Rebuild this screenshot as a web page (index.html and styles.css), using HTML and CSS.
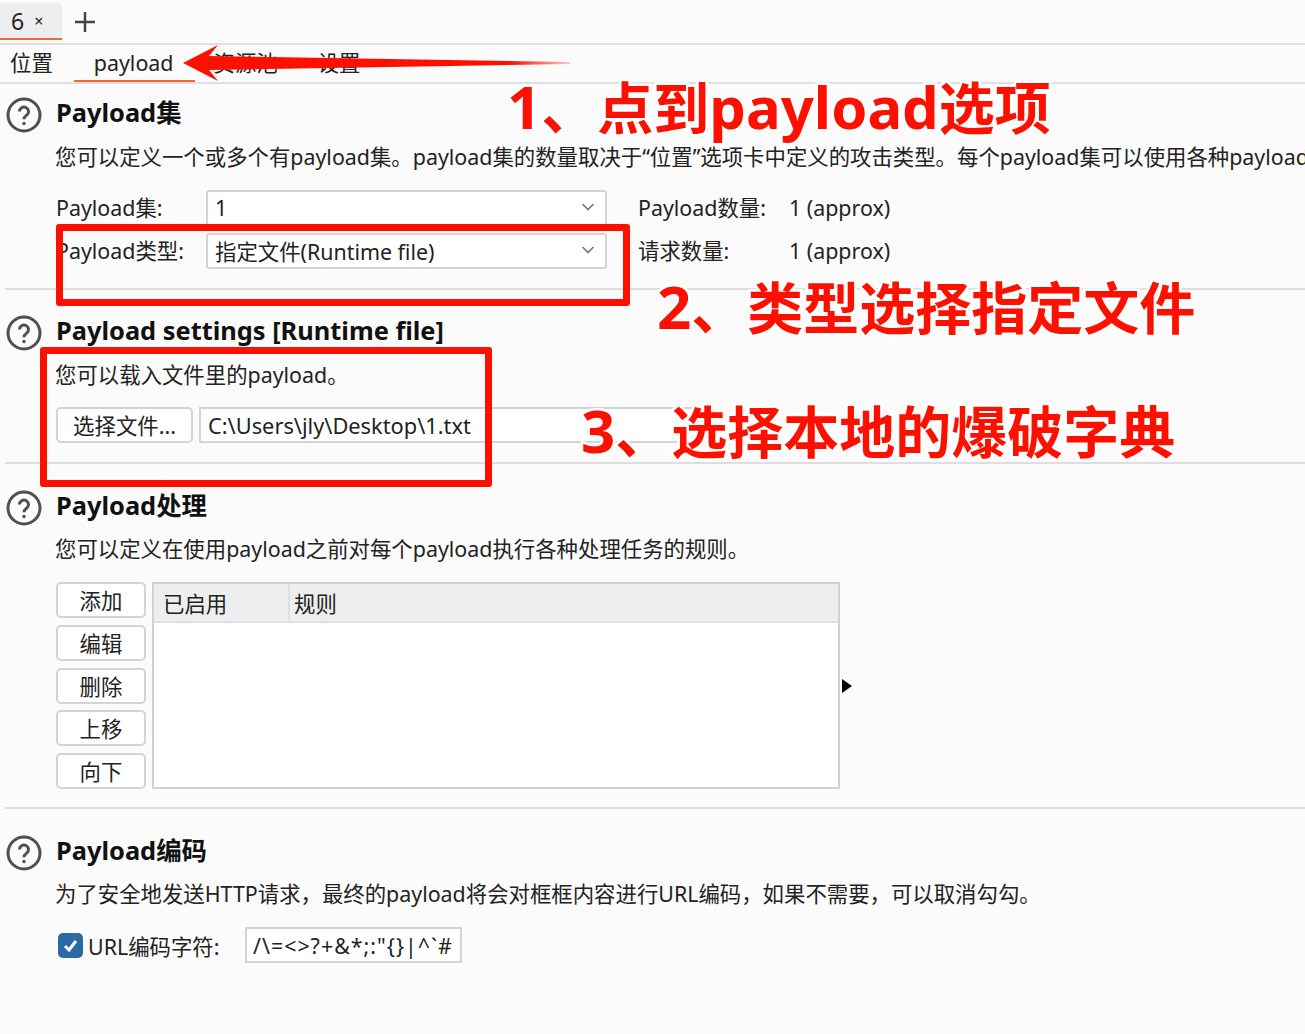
FILE: index.html
```html
<!DOCTYPE html>
<html lang="zh-CN">
<head>
<meta charset="utf-8">
<title>Intruder payload</title>
<link rel="stylesheet" href="styles.css">
</head>
<body>
<div class="page">
  <header class="tabbar">
    <div class="tab"><span class="tab-num">6</span><span class="tab-close">×</span></div>
    <svg class="tab-add" width="22" height="22" viewBox="0 0 22 22"><path d="M11 1v20M1 11h20"/></svg>
  </header>
  <nav class="subnav">
    <span class="subtab first">位置</span>
    <span class="subtab active">payload</span>
    <span class="subtab">资源池</span>
    <span class="subtab">设置</span>
  </nav>

  <section class="section">
    <div class="head">
      <svg class="help" width="36" height="36" viewBox="0 0 36 36"><circle cx="18" cy="18" r="16"/><path d="M13.500 14.500a4.500 4.500 0 1 1 7.200 3.600c-1.800 1.300-2.700 2.300-2.700 4.100"/><circle class="dot" cx="18" cy="26.500" r="1.700"/></svg>
      <h2 class="title">Payload集</h2>
    </div>
    <p class="desc">您可以定义一个或多个有payload集。payload集的数量取决于“位置”选项卡中定义的攻击类型。每个payload集可以使用各种payload</p>
    <div class="form-grid">
      <span class="label">Payload集:</span>
      <div class="combo"><span>1</span><svg class="chev" width="14" height="8" viewBox="0 0 14 8"><path d="M1.500 1l5.500 5.500L12.500 1"/></svg></div>
      <span class="label stat">Payload数量:</span>
      <span class="label">1 (approx)</span>
      <span class="label">Payload类型:</span>
      <div class="combo"><span>指定文件(Runtime file)</span><svg class="chev" width="14" height="8" viewBox="0 0 14 8"><path d="M1.500 1l5.500 5.500L12.500 1"/></svg></div>
      <span class="label stat">请求数量:</span>
      <span class="label">1 (approx)</span>
    </div>
  </section>
  <hr class="rule">

  <section class="section">
    <div class="head">
      <svg class="help" width="36" height="36" viewBox="0 0 36 36"><circle cx="18" cy="18" r="16"/><path d="M13.500 14.500a4.500 4.500 0 1 1 7.200 3.600c-1.800 1.300-2.700 2.300-2.700 4.100"/><circle class="dot" cx="18" cy="26.500" r="1.700"/></svg>
      <h2 class="title">Payload settings [Runtime file]</h2>
    </div>
    <p class="desc">您可以载入文件里的payload。</p>
    <div class="file-row">
      <button class="btn file-btn">选择文件...</button>
      <div class="field path">C:\Users\jly\Desktop\1.txt</div>
    </div>
  </section>
  <hr class="rule">

  <section class="section low">
    <div class="head">
      <svg class="help" width="36" height="36" viewBox="0 0 36 36"><circle cx="18" cy="18" r="16"/><path d="M13.500 14.500a4.500 4.500 0 1 1 7.200 3.600c-1.800 1.300-2.700 2.300-2.700 4.100"/><circle class="dot" cx="18" cy="26.500" r="1.700"/></svg>
      <h2 class="title">Payload处理</h2>
    </div>
    <p class="desc">您可以定义在使用payload之前对每个payload执行各种处理任务的规则。</p>
    <div class="rules">
      <div class="btn-col">
        <button class="btn">添加</button>
        <button class="btn">编辑</button>
        <button class="btn">删除</button>
        <button class="btn">上移</button>
        <button class="btn">向下</button>
      </div>
      <div class="table">
        <div class="thead">
          <span class="th th-first">已启用</span>
          <span class="th">规则</span>
        </div>
      </div>
      <svg class="splitter" width="10" height="14" viewBox="0 0 10 14"><path d="M0 0l10 7-10 7z"/></svg>
    </div>
  </section>
  <hr class="rule">

  <section class="section low">
    <div class="head">
      <svg class="help" width="36" height="36" viewBox="0 0 36 36"><circle cx="18" cy="18" r="16"/><path d="M13.500 14.500a4.500 4.500 0 1 1 7.200 3.600c-1.800 1.300-2.700 2.300-2.700 4.100"/><circle class="dot" cx="18" cy="26.500" r="1.700"/></svg>
      <h2 class="title">Payload编码</h2>
    </div>
    <p class="desc">为了安全地发送HTTP请求，最终的payload将会对框框内容进行URL编码，如果不需要，可以取消勾勾。</p>
    <div class="encode-row">
      <svg class="check" width="25" height="25" viewBox="0 0 25 25"><rect width="25" height="25" rx="5"/><path d="M7 13l4 4 7-9"/></svg>
      <span class="encode-label">URL编码字符:</span>
      <div class="field chars">/\=&lt;&gt;?+&amp;*;:"{}|^`#</div>
    </div>
  </section>

  <div class="mark mark-type"></div>
  <div class="mark mark-file"></div>
  <svg class="arrow" width="400" height="40" viewBox="0 0 400 40">
    <defs><linearGradient id="fade" x1="0" x2="1" y1="0" y2="0"><stop offset="0.85" stop-color="#fe1000"/><stop offset="1" stop-color="#fe1000" stop-opacity="0.2"/></linearGradient></defs>
    <path d="M3 18L38 0l-9 11 361 6v2L29 25l9 11z" fill="url(#fade)"/>
  </svg>
  <div class="note note-1"><span class="digit">1</span>、点到<span class="latin">payload</span>选项</div>
  <div class="note note-2"><span class="digit">2</span>、类型选择指定文件</div>
  <div class="note note-3"><span class="digit">3</span>、选择本地的爆破字典</div>
</div>
</body>
</html>
```
FILE: styles.css
```css
* { box-sizing: border-box; }
html, body { margin: 0; padding: 0; }
body {
  background: #fbfbfb;
  color: #222;
  font-family: "Noto Sans", "Noto Sans CJK SC", sans-serif;
  font-size: 21.4px;
}
.page {
  position: relative;
  width: 1305px;
  height: 1034px;
  overflow: hidden;
}

.tabbar {
  display: flex;
  align-items: flex-start;
  height: 45px;
  padding-top: 3px;
  border-bottom: 2px solid #e0e0e0;
}
.tab {
  display: flex;
  align-items: center;
  width: 62px;
  height: 37px;
  padding-left: 11px;
  gap: 10px;
  background: #eeeeee;
  border-bottom: 2px solid #f0693a;
  border-top-right-radius: 5px;
}
.tab-num { font-size: 23px; }
.tab-close { font-size: 16px; }
.tab-add { margin: 8px 0 0 12px; }
.tab-add path { fill: none; stroke: #444; stroke-width: 2.5; }

.subnav {
  display: flex;
  height: 39px;
  border-bottom: 2px solid #e0e0e0;
}
.subtab {
  padding: 0 20px;
  line-height: 36px;
}
.subtab.first { padding-left: 10px; padding-right: 21px; }
.subtab.active {
  height: 37px;
  padding-right: 22px;
  margin-right: -2px;
  border-bottom: 2px solid #f0693a;
}

.section { padding-top: 14px; }
.rule + .section { padding-top: 26px; }
.rule {
  height: 2px;
  margin: 19px 0 0 5px;
  border: 0;
  background: #dedede;
}
.head {
  display: flex;
  align-items: center;
  gap: 14px;
  height: 34px;
  padding-left: 6px;
}
.section.low .head { margin-top: 1px; }
.section.low .desc { margin-top: 9px; }
.help { flex: none; }
.help circle, .help path { fill: none; stroke: #505050; stroke-width: 3; }
.help .dot { fill: #505050; stroke: none; }
.title {
  margin: 0 0 6px;
  font-size: 25.400px;
  font-weight: 700;
  line-height: 30px;
  color: #111;
}
.desc {
  margin: 10px 0 0 55px;
  line-height: 30px;
  white-space: nowrap;
}

.form-grid {
  display: grid;
  grid-template-columns: 150px 401px 182px 1fr;
  row-gap: 7px;
  margin: 18px 0 0 56px;
}
.label { line-height: 36px; white-space: nowrap; }
.stat { padding-left: 31px; }
.combo {
  display: flex;
  align-items: center;
  justify-content: space-between;
  height: 36px;
  padding: 0 10px 2px 7px;
  background: #fff;
  border: 2px solid #d4d4d4;
  border-radius: 3px;
}
.chev path { fill: none; stroke: #777; stroke-width: 1.600; }

.btn {
  display: block;
  height: 36px;
  padding: 0 0 2px;
  background: #fff;
  border: 2px solid #d4d4d4;
  border-radius: 5px;
  color: inherit;
  font: inherit;
}
.field {
  height: 36px;
  line-height: 33px;
  background: #fff;
  border: 2px solid #d4d4d4;
  white-space: nowrap;
}

.file-row {
  display: flex;
  gap: 6px;
  margin: 17px 0 0 56px;
}
.file-btn { width: 137px; }
.path { width: 500px; padding-left: 7px; font-size: 21.800px; }

.rules {
  display: flex;
  align-items: center;
  margin: 18px 0 -1px 56px;
}
.btn-col {
  display: flex;
  flex-direction: column;
  justify-content: space-between;
  width: 90px;
  height: 207px;
}
.table {
  width: 688px;
  height: 207px;
  margin-left: 6px;
  background: #fff;
  border: 2px solid #d0d0d0;
}
.thead {
  display: flex;
  height: 39px;
  background: #eeeeee;
  border-bottom: 2px solid #e0e0e0;
}
.th {
  padding-left: 4px;
  line-height: 39px;
}
.th-first {
  width: 136px;
  padding-left: 9px;
  border-right: 2px solid #e0e0e0;
}
.splitter { margin-left: 2px; }
.splitter path { fill: #000; }

.encode-row {
  display: flex;
  align-items: center;
  height: 36px;
  margin: 18px 0 0 58px;
}
.check { flex: none; }
.check rect { fill: #2a69a4; }
.check path { fill: none; stroke: #fff; stroke-width: 3; }
.encode-label { width: 162px; padding-left: 5px; white-space: nowrap; }
.chars { width: 217px; padding-left: 6px; letter-spacing: 1px; }

/* Annotations drawn on top of the screenshot */
.mark {
  position: absolute;
  border: 7px solid #fe1000;
  border-radius: 3px;
}
.mark-type { left: 56px; top: 224px; width: 574px; height: 82px; }
.mark-file { left: 40px; top: 347px; width: 452px; height: 140px; }
.arrow { position: absolute; left: 180px; top: 45px; }
.note {
  position: absolute;
  color: #fe1000;
  font-family: "Noto Sans", "Noto Sans CJK SC", sans-serif;
  font-size: 56px;
  font-weight: 700;
  line-height: 60px;
  white-space: nowrap;
  -webkit-text-stroke: 5px #fff;
  paint-order: stroke fill;
}
.digit { font-size: 60px; }
.latin { font-size: 58px; }
.note-1 { left: 507px; top: 76px; }
.note-2 { left: 657px; top: 276px; }
.note-3 { left: 581px; top: 400px; }
```
